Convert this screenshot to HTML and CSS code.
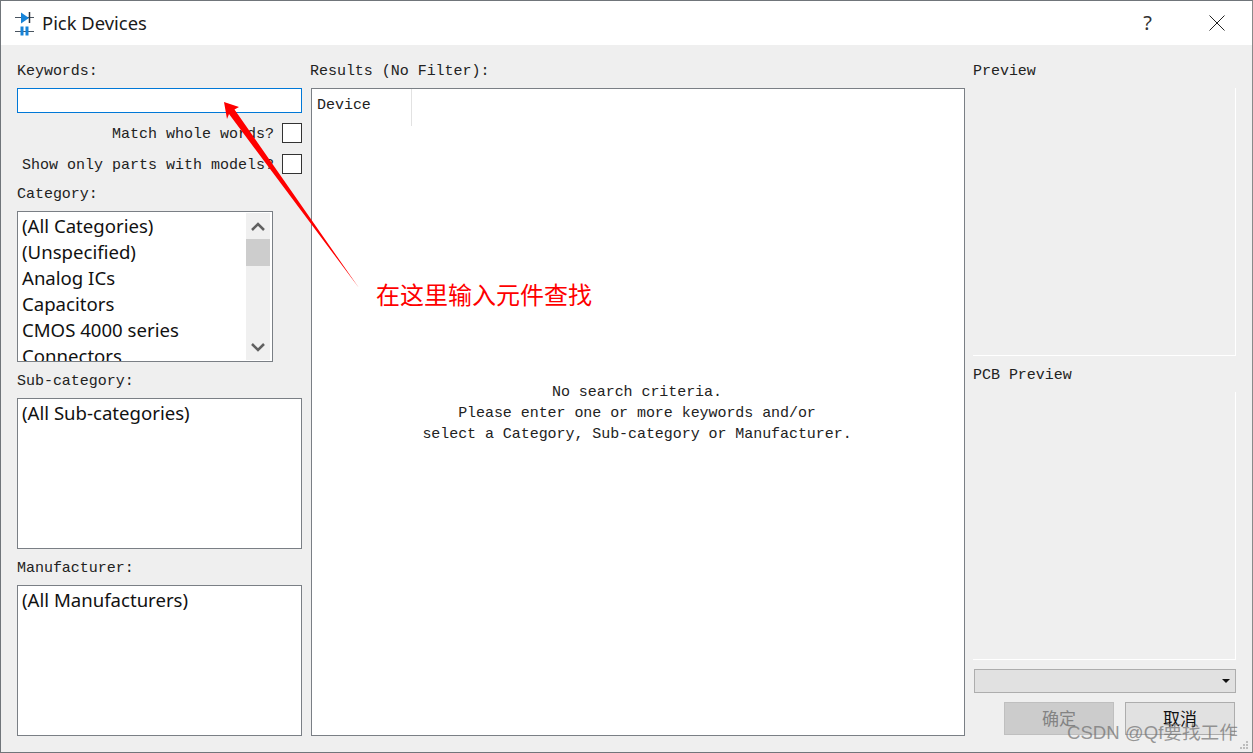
FILE: index.html
```html
<!DOCTYPE html>
<html lang="en">
<head>
    <meta charset="UTF-8">
    <meta name="viewport" content="width=device-width, initial-scale=1.0">
    <title>Pick Devices</title>
    <link rel="stylesheet" href="styles.css">
</head>
<body>
<div class="window">

    <!-- Title bar -->
    <div class="titlebar">
        <svg class="app-icon" width="24" height="28" viewBox="0 0 24 28">
            <path d="M2 6.500h19M2 20.500h19" stroke="#4a5560" stroke-width="1" fill="none"/>
            <path d="M16.500 1v11" stroke="#2c3640" stroke-width="1.500" fill="none"/>
            <path d="M8 1.500v11L16 7z" fill="#1683d8"/>
            <path d="M7.500 15.500h3v9h-3zM12.500 15.500h3v9h-3z" fill="#1683d8"/>
        </svg>
        <span class="title">Pick Devices</span>
        <span class="help">?</span>
        <svg class="close" width="16" height="16" viewBox="0 0 16 16">
            <path d="M0.500 0.500l15 15M15.500 0.500l-15 15" stroke="#222" stroke-width="1" fill="none"/>
        </svg>
    </div>

    <div class="content">

        <!-- Left column: filters -->
        <div class="filters">
            <label class="field-label top">Keywords:</label>
            <input class="keywords" type="text">

            <div class="check-row first">
                <span>Match whole words?</span>
                <span class="checkbox"></span>
            </div>
            <div class="check-row">
                <span>Show only parts with models?</span>
                <span class="checkbox"></span>
            </div>

            <label class="field-label cat-label">Category:</label>
            <div class="listbox category">
                <ul class="items">
                    <li>(All Categories)</li>
                    <li>(Unspecified)</li>
                    <li>Analog ICs</li>
                    <li>Capacitors</li>
                    <li>CMOS 4000 series</li>
                    <li>Connectors</li>
                </ul>
                <div class="scrollbar">
                    <svg width="24" height="26" viewBox="0 0 24 26"><path d="M6 17l6-6 6 6" stroke="#606060" stroke-width="2.500" fill="none"/></svg>
                    <div class="thumb"></div>
                    <svg class="down" width="24" height="26" viewBox="0 0 24 26"><path d="M6 10l6 6 6-6" stroke="#606060" stroke-width="2.500" fill="none"/></svg>
                </div>
            </div>

            <label class="field-label">Sub-category:</label>
            <div class="listbox">
                <ul class="items">
                    <li>(All Sub-categories)</li>
                </ul>
            </div>

            <label class="field-label">Manufacturer:</label>
            <div class="listbox">
                <ul class="items">
                    <li>(All Manufacturers)</li>
                </ul>
            </div>
        </div>

        <!-- Middle column: results -->
        <div class="results">
            <label class="field-label top">Results (No Filter):</label>
            <div class="results-box">
                <div class="col-head">Device</div>
                <div class="empty-msg">
                    <p>No search criteria.</p>
                    <p>Please enter one or more keywords and/or</p>
                    <p>select a Category, Sub-category or Manufacturer.</p>
                </div>
            </div>
        </div>

        <!-- Right column: previews -->
        <div class="previews">
            <label class="field-label top">Preview</label>
            <div class="preview-panel"></div>
            <label class="field-label">PCB Preview</label>
            <div class="preview-panel"></div>
            <div class="combo"><span class="caret"></span></div>
            <div class="buttons">
                <button class="btn disabled">确定</button>
                <button class="btn">取消</button>
            </div>
        </div>
    </div>

    <!-- Annotation drawn over the dialog -->
    <svg class="arrow" width="1253" height="753" viewBox="0 0 1253 753">
        <path d="M224 102L239 107L234.500 109.500L359 288L229 114L227 119z" fill="#fe0000"/>
    </svg>
    <div class="note">在这里输入元件查找</div>
    <div class="watermark">CSDN @Qf要找工作</div>
    <svg class="grip" width="10" height="10" viewBox="0 0 10 10">
        <path d="M7 1h2v2H7zM4 4h2v2H4zM7 4h2v2H7zM1 7h2v2H1zM4 7h2v2H4zM7 7h2v2H7z" fill="#bdbdbd"/>
    </svg>
</div>
</body>
</html>
```
FILE: styles.css
```css
/* General Styles */
* {
    box-sizing: border-box;
}

body {
    margin: 0;
    background-color: #5f6468;
    font-family: "Liberation Mono", "Noto Sans CJK SC", monospace;
    font-size: 15px;
    letter-spacing: -0.03px;
    color: #222;
}

.window {
    position: relative;
    width: 1253px;
    height: 753px;
    overflow: hidden;
    background-color: #efefef;
    border: 1px solid #70757a;
    border-right-color: #8a8a8a;
}

/* Title bar */
.titlebar {
    display: flex;
    align-items: center;
    height: 44px;
    padding-left: 12px;
    background-color: #fff;
    letter-spacing: 0;
}

.app-icon {
    flex-shrink: 0;
    margin-top: 3px;
}

.title {
    margin-left: 5px;
    margin-top: -2px;
    font-family: "Noto Sans", "Noto Sans CJK SC", sans-serif;
    font-size: 18.400px;
    color: #1a1a1a;
}

.help {
    margin-left: auto;
    margin-top: -2px;
    font-family: "Noto Sans", sans-serif;
    font-size: 20px;
    color: #333;
}

.close {
    margin: 0 27px 0 57px;
}

/* Three columns */
.content {
    display: flex;
    padding: 0 16px;
}

.field-label {
    display: block;
    height: 36px;
    padding-top: 11px;
    line-height: 18px;
}

.field-label.top {
    height: 43px;
    padding-top: 18px;
}

/* Left column */
.filters {
    display: flex;
    flex-direction: column;
    width: 285px;
}

.keywords {
    display: block;
    width: 285px;
    height: 25px;
    padding: 0;
    background: #fff;
    border: 1px solid #0078d7;
    outline: none;
}

.check-row {
    display: flex;
    justify-content: flex-end;
    align-items: center;
    gap: 8px;
    height: 20px;
    margin-top: 11px;
    letter-spacing: 0;
}

.check-row.first {
    margin-top: 10px;
}

.check-row span:first-child {
    padding-top: 2px;
}

.checkbox {
    width: 20px;
    height: 20px;
    background: #fff;
    border: 1px solid #333;
}

.field-label.cat-label {
    height: 37px;
    padding-top: 12px;
}

.listbox {
    display: flex;
    flex-shrink: 0;
    height: 151px;
    overflow: hidden;
    background: #fff;
    border: 1px solid #7a7f85;
}

.listbox.category {
    width: 256px;
}

.items {
    flex: 1;
    margin: 0;
    padding: 1px 0 0 4px;
    list-style: none;
    font-family: "Noto Sans", "Noto Sans CJK SC", sans-serif;
    font-size: 18.600px;
    line-height: 26px;
    letter-spacing: 0;
    color: #111;
}

.scrollbar {
    display: flex;
    flex-direction: column;
    flex-shrink: 0;
    width: 24px;
    margin: 1px 2px 1px 0;
    background: #f0f0f0;
}

.thumb {
    height: 27px;
    background: #cdcdcd;
}

.scrollbar .down {
    margin-top: auto;
}

/* Middle column */
.results {
    width: 654px;
    margin-left: 9px;
}

.results .field-label {
    margin-left: -1px;
}

.results-box {
    position: relative;
    height: 648px;
    background: #fff;
    border: 1px solid #7a7f85;
}

.col-head {
    width: 100px;
    height: 37px;
    padding: 8px 0 0 5px;
    border-right: 1px solid #e2e2e2;
    line-height: 18px;
}

.empty-msg {
    margin-top: 256px;
    padding-right: 2px;
    text-align: center;
    line-height: 21px;
    letter-spacing: -0.06px;
}

.empty-msg p {
    margin: 0;
}

/* Right column */
.previews {
    display: flex;
    flex-direction: column;
    width: 263px;
    margin-left: 8px;
}

.preview-panel {
    height: 268px;
    flex-shrink: 0;
    border-right: 1px solid #fff;
    border-bottom: 1px solid #fff;
}

.combo {
    display: flex;
    justify-content: flex-end;
    align-items: center;
    height: 24px;
    margin: 9px 0 0 1px;
    padding-right: 5px;
    background: #e1e1e1;
    border: 1px solid #adadad;
}

.caret {
    width: 0;
    height: 0;
    border-left: 4px solid transparent;
    border-right: 4px solid transparent;
    border-top: 4px solid #111;
}

.buttons {
    display: flex;
    justify-content: flex-end;
    gap: 11px;
    margin-top: 9px;
    padding-right: 1px;
}

.btn {
    width: 110px;
    height: 33px;
    padding: 0 0 3px;
    font-family: "Noto Sans CJK SC", sans-serif;
    font-size: 17px;
    color: #111;
    background: #e1e1e1;
    border: 1px solid #adadad;
}

.btn.disabled {
    color: #838383;
    background: #cccccc;
    border-color: #bfbfbf;
}

/* Annotation over the dialog */
.arrow {
    position: absolute;
    left: -1px;
    top: -1px;
    pointer-events: none;
}

.note {
    position: absolute;
    left: 375px;
    top: 278px;
    font-family: "Noto Sans CJK SC", sans-serif;
    font-size: 24px;
    line-height: 30px;
    letter-spacing: 0;
    color: #fe0000;
}

.watermark {
    position: absolute;
    left: 1066px;
    top: 720px;
    font-family: "Liberation Sans", "Noto Sans CJK SC", sans-serif;
    font-size: 18.600px;
    line-height: 24px;
    letter-spacing: 0;
    color: rgba(110, 110, 110, 0.7);
}

.grip {
    position: absolute;
    right: 3px;
    bottom: 2px;
}
```
